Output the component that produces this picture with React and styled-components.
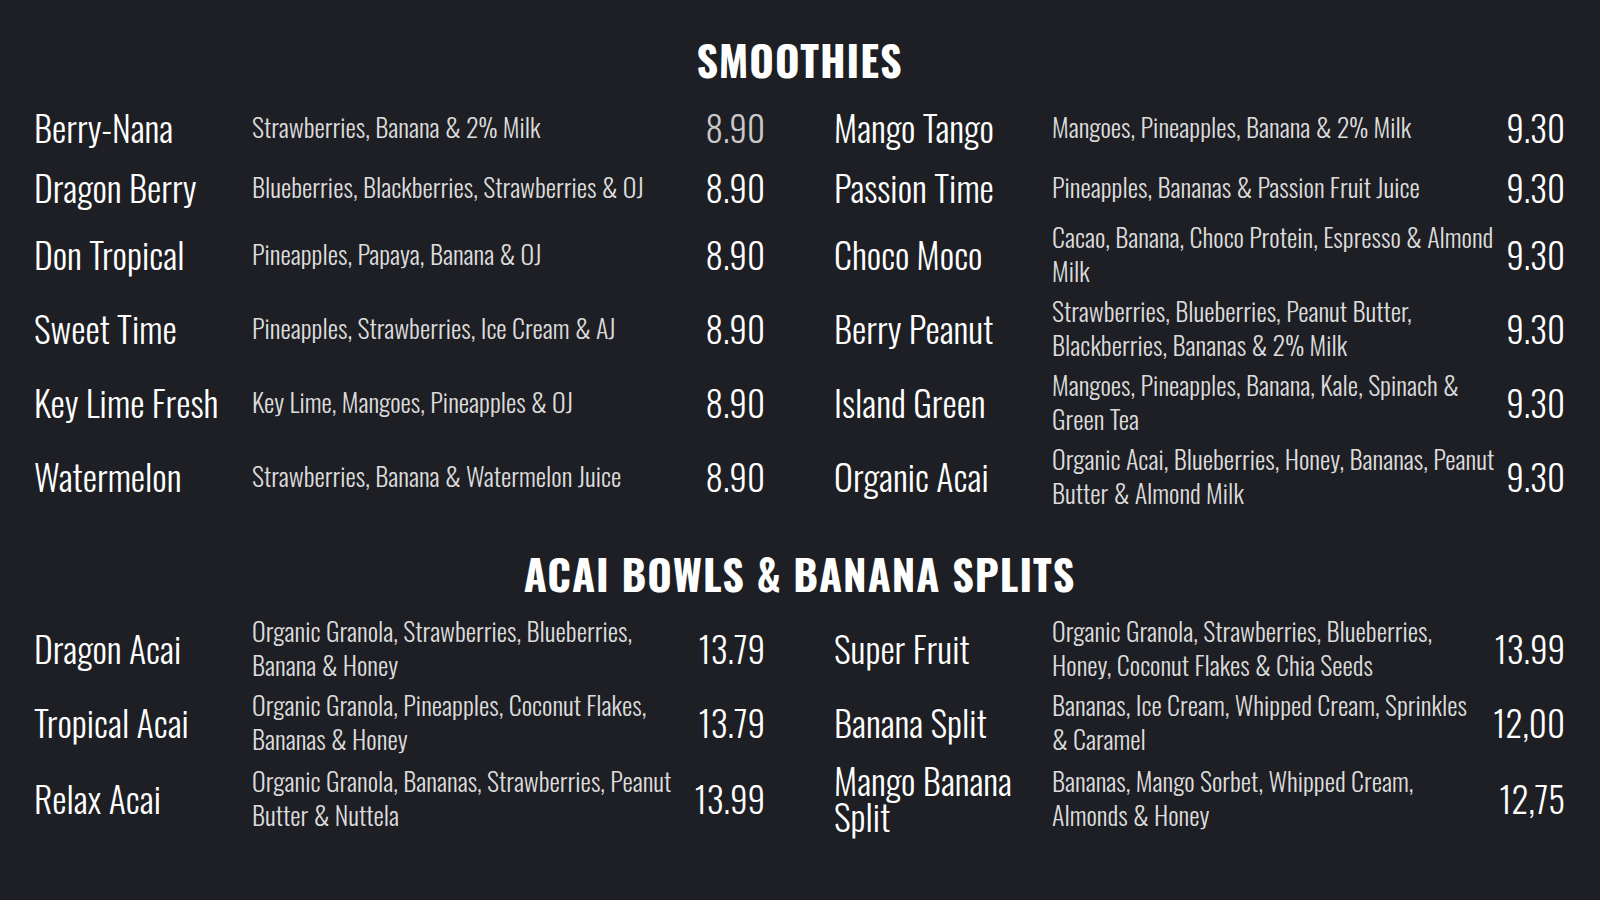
import styled, { createGlobalStyle } from "styled-components";

const GlobalStyle = createGlobalStyle`
  html, body {
    margin: 0;
    background: #1e1f24;
  }
  body {
    font-family: Oswald, "Roboto Condensed", sans-serif;
    color: #fff;
  }
`;

const Page = styled.div`
  box-sizing: border-box;
  width: 1600px;
  min-height: 900px;
  padding: 29px 35px 0 34px;
  background: #1e1f24;
`;

const Section = styled.section`
  margin-bottom: ${(p) => p.$after || 0}px;
`;

const Title = styled.h2`
  margin: 0 0 11px;
  text-align: center;
  font-size: 42px;
  line-height: 60px;
  font-weight: 700;
  letter-spacing: 1px;
  color: #fff;
`;

const Grid = styled.div`
  display: grid;
  grid-template-columns: 1fr 1fr;
  grid-template-rows: ${(p) => `repeat(${p.$rows}, auto)`};
  grid-auto-flow: column;
  column-gap: 69px;
  row-gap: 6px;
`;

const Item = styled.div`
  display: grid;
  grid-template-columns: 218px minmax(0, 1fr) 74px;
  align-items: center;
`;

const Name = styled.div`
  font-size: 36px;
  line-height: 36px;
  font-weight: 300;
  color: #fff;
`;

const Desc = styled.div`
  font-size: 26px;
  line-height: 34px;
  font-weight: 300;
  color: #dcdcdc;
  white-space: pre;
`;

const Price = styled.div`
  text-align: right;
  font-size: 35px;
  line-height: 54px;
  font-weight: 300;
  white-space: nowrap;
  color: ${(p) => (p.$muted ? "#c9c9c9" : "#fff")};
`;

const smoothies = [
  { name: "Berry-Nana", desc: "Strawberries, Banana & 2% Milk", price: "8.90", muted: true },
  { name: "Dragon Berry", desc: "Blueberries, Blackberries, Strawberries & OJ", price: "8.90" },
  { name: "Don Tropical", desc: "Pineapples, Papaya, Banana & OJ", price: "8.90" },
  { name: "Sweet Time", desc: "Pineapples, Strawberries, Ice Cream & AJ", price: "8.90" },
  { name: "Key Lime Fresh", desc: "Key Lime, Mangoes, Pineapples & OJ", price: "8.90" },
  { name: "Watermelon", desc: "Strawberries, Banana & Watermelon Juice", price: "8.90" },
  { name: "Mango Tango", desc: "Mangoes, Pineapples, Banana & 2% Milk", price: "9.30" },
  { name: "Passion Time", desc: "Pineapples, Bananas & Passion Fruit Juice", price: "9.30" },
  { name: "Choco Moco", desc: "Cacao, Banana, Choco Protein, Espresso & Almond\nMilk", price: "9.30" },
  { name: "Berry Peanut", desc: "Strawberries, Blueberries, Peanut Butter,\nBlackberries, Bananas & 2% Milk", price: "9.30" },
  { name: "Island Green", desc: "Mangoes, Pineapples, Banana, Kale, Spinach &\nGreen Tea", price: "9.30" },
  { name: "Organic Acai", desc: "Organic Acai, Blueberries, Honey, Bananas, Peanut\nButter & Almond Milk", price: "9.30" },
];

const bowls = [
  { name: "Dragon Acai", desc: "Organic Granola, Strawberries, Blueberries,\nBanana & Honey", price: "13.79" },
  { name: "Tropical Acai", desc: "Organic Granola, Pineapples, Coconut Flakes,\nBananas & Honey", price: "13.79" },
  { name: "Relax Acai", desc: "Organic Granola, Bananas, Strawberries, Peanut\nButter & Nuttela", price: "13.99" },
  { name: "Super Fruit", desc: "Organic Granola, Strawberries, Blueberries,\nHoney, Coconut Flakes & Chia Seeds", price: "13.99" },
  { name: "Banana Split", desc: "Bananas, Ice Cream, Whipped Cream, Sprinkles\n& Caramel", price: "12,00" },
  { name: "Mango Banana Split", desc: "Bananas, Mango Sorbet, Whipped Cream,\nAlmonds & Honey", price: "12,75" },
];

const MenuSection = ({ title, items, after }) => (
  <Section $after={after}>
    <Title>{title}</Title>
    <Grid $rows={items.length / 2}>
      {items.map((item) => (
        <Item key={item.name}>
          <Name>{item.name}</Name>
          <Desc>{item.desc}</Desc>
          <Price $muted={item.muted}>{item.price}</Price>
        </Item>
      ))}
    </Grid>
  </Section>
);

const App = () => {
  return (
    <>
      <GlobalStyle />
      <Page>
        <MenuSection title="SMOOTHIES" items={smoothies} after={33} />
        <MenuSection title="ACAI BOWLS & BANANA SPLITS" items={bowls} />
      </Page>
    </>
  );
};

export default App;
